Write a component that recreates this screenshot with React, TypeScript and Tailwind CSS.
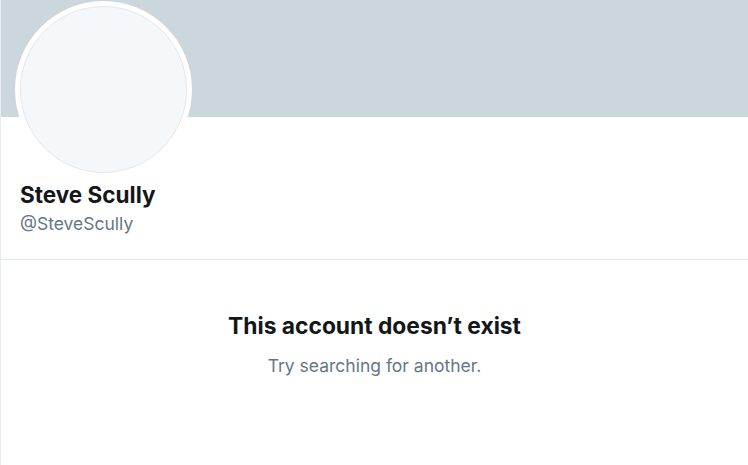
export default function App() {
  return (
    <div
      className="h-[465px] w-[748px] overflow-hidden border-l border-[#e6ecf0] bg-white"
      style={{ fontFamily: "Inter, 'Liberation Sans', sans-serif" }}
    >
      {/* Banner + avatar */}
      <div className="relative">
        <div className="h-[117px] bg-[#ccd6dd]" />
        <div className="absolute left-[14px] top-[1px] h-[177px] w-[177px] rounded-full bg-white p-[5px]">
          <div className="h-full w-full rounded-full border border-[#e1e8ed] bg-[#f5f8fa]" />
        </div>
      </div>

      {/* Name block */}
      <div className="h-[143px] border-b border-[#e6ecf0] px-[19px] pt-[64px]">
        <div className="text-[22.5px] font-bold leading-[28px] text-[#14171a]">Steve Scully</div>
        <div className="mt-[4px] text-[17.5px] leading-[22px] text-[#657786]">@SteveScully</div>
      </div>

      {/* Empty state */}
      <div className="flex flex-col items-center pt-[51px]">
        <div className="text-[22.8px] font-bold leading-[30px] text-[#14171a]">This account doesn’t exist</div>
        <div className="mt-[14px] text-[17.5px] leading-[22px] text-[#657786]">Try searching for another.</div>
      </div>
    </div>
  );
}
